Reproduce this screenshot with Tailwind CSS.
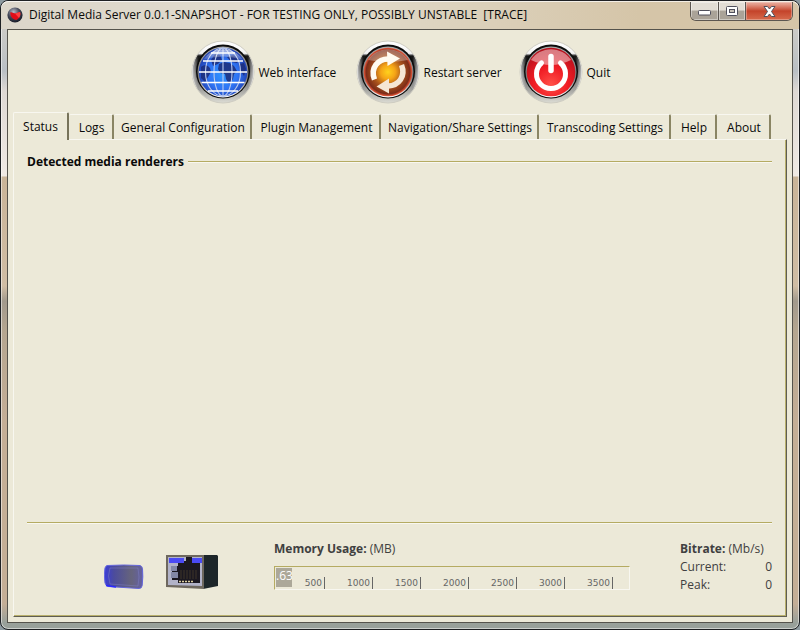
<!DOCTYPE html>
<html lang="en">
<head>
<meta charset="utf-8">
<title>Digital Media Server</title>
<script src="https://cdn.jsdelivr.net/npm/@tailwindcss/browser@4"></script>
</head>
<body class="min-h-screen bg-[#8d9aa0] font-['Open_Sans','Noto_Sans',sans-serif] text-xs text-[#0a0a0a]">
<div class="flex min-h-screen flex-col rounded-lg border border-[#1f2124] bg-[linear-gradient(to_bottom,#d9d3c8_0,#b9bfc4_70px,#ded9d4_90px,#f0eae4_175px,#c9b498_176px,#d0bda4_285px,#a39a8c_300px,#b5a690_330px,#c4ae96_420px,#c4ae96_96%,#98a09a_99%)] px-1.5 pb-1.5 inset-ring inset-ring-white/50">

  <header class="-mx-1.5 flex h-7 items-start justify-between rounded-t-lg border-t border-white/70 bg-linear-to-r from-[#dcd6ca] via-[#e2dccd] via-40% to-[#d5c5a8] to-80% px-1.5">
    <div class="flex h-[26px] items-center gap-1.5">
      <svg class="size-4" viewBox="0 0 16 16" aria-hidden="true">
        <defs><radialGradient id="app" cx=".4" cy=".3" r=".75"><stop offset="0" stop-color="#b9bcc8"/><stop offset=".5" stop-color="#454858"/><stop offset="1" stop-color="#111522"/></radialGradient></defs>
        <circle cx="8" cy="8" r="7.6" fill="url(#app)"/>
        <path d="M3.500 5 8 6.500l5-1.500c1 3-.5 6.500-3.500 8C6 13 2.500 9 3.500 5z" fill="#e00c18"/>
        <path d="M8 6.500l5-1.500c.8 2 .3 4-1 6z" fill="#ff4040"/>
      </svg>
      <h1>Digital Media Server 0.0.1-SNAPSHOT - FOR TESTING ONLY, POSSIBLY UNSTABLE&nbsp; [TRACE]</h1>
    </div>
    <div class="flex h-[19px] overflow-hidden rounded-b-md border border-t-0 border-[#5c5650]">
      <button aria-label="Minimize" class="flex w-7 items-center justify-center border-r border-[#5c5650] bg-linear-to-b from-[#e2ddd4] from-45% to-[#aaa398] to-50% pt-1 inset-ring inset-ring-white/40">
        <svg width="13" height="6" viewBox="0 0 13 6" aria-hidden="true"><rect x=".5" y=".5" width="12" height="4.500" rx="1" fill="#fff" stroke="#50505c"/></svg>
      </button>
      <button aria-label="Maximize" class="flex w-[27px] items-center justify-center border-r border-[#5c5650] bg-linear-to-b from-[#e2ddd4] from-45% to-[#aaa398] to-50% inset-ring inset-ring-white/40">
        <svg width="12" height="10" viewBox="0 0 12 10" aria-hidden="true"><rect x=".5" y=".5" width="11" height="9" rx="1" fill="#fff" stroke="#50505c"/><rect x="3.500" y="3.500" width="5" height="3" fill="#c8c2b8" stroke="#50505c"/></svg>
      </button>
      <button aria-label="Close" class="flex w-[46px] items-center justify-center bg-linear-to-b from-[#e5a190] from-10% via-[#c4432a] via-50% to-[#d66a4c] inset-ring inset-ring-white/30">
        <svg width="13" height="11" viewBox="0 0 13 11" aria-hidden="true"><path d="M1 .5h3.500l2 2.500 2-2.500H12L8.500 5.500 12 10.500H8.500l-2-2.500-2 2.500H1l3.500-5z" fill="#fff" stroke="#50505c"/></svg>
      </button>
    </div>
  </header>

  <main class="flex flex-1 flex-col border border-[#55534c] bg-[#ece9d8] px-[5px] pb-[5px]">
    <nav aria-label="Server actions" class="flex items-center justify-center gap-6 pt-2.5 pb-2">
      <button class="flex w-[141px] items-center gap-1 whitespace-nowrap">
        <svg class="size-16 shrink-0" viewBox="0 0 64 64" aria-hidden="true">
          <defs>
            <linearGradient id="rim" x2="0" y2="1"><stop offset="0" stop-color="#fff"/><stop offset=".2" stop-color="#f4f4f4"/><stop offset=".24" stop-color="#151515"/><stop offset=".45" stop-color="#2a2a2a"/><stop offset=".7" stop-color="#8e8e8c"/><stop offset="1" stop-color="#dcdcd4"/></linearGradient>
            <linearGradient id="rimx"><stop offset="0" stop-color="#fff" stop-opacity=".75"/><stop offset=".1" stop-color="#fff" stop-opacity="0"/><stop offset=".9" stop-color="#fff" stop-opacity="0"/><stop offset="1" stop-color="#fff" stop-opacity=".75"/></linearGradient>
            <linearGradient id="edge" x2="0" y2="1"><stop offset="0" stop-color="#a8a8a8"/><stop offset=".6" stop-color="#777"/><stop offset="1" stop-color="#fff"/></linearGradient>
            <radialGradient id="blue" cy=".55"><stop offset="0" stop-color="#2f96ff"/><stop offset=".6" stop-color="#2f74f4"/><stop offset="1" stop-color="#2346b8"/></radialGradient>
            <linearGradient id="shine" x2="0" y2="1"><stop offset="0" stop-color="#fff" stop-opacity=".65"/><stop offset="1" stop-color="#fff" stop-opacity=".1"/></linearGradient>
          </defs>
          <circle cx="32" cy="32" r="31" fill="url(#rim)" stroke="#cfcdc2"/><circle cx="32" cy="32" r="31" fill="url(#rimx)"/>
          <circle cx="32" cy="31.500" r="27" fill="#0c0c0c"/><circle cx="32" cy="32" r="25.500" fill="url(#edge)"/>
          <circle cx="32" cy="32" r="24.300" fill="url(#blue)"/>
          <path d="M10 27c3-3 7-2 9 1l1 4-3 5-3 5-4-4zM20 20l4-6 5 1 2 5-4 4-5 2zM28 24l5-2 6 1 4 3 3 5-3 3-1 5-4 5-3-5-1-5-5-1-2-4zM36 17l6-2 6 4-2 4-6-1zM48 24l5-1 2 6-2 7-4-6z" fill="#1c2c78" opacity=".85"/>
          <g fill="none" stroke="#b9c8ec" stroke-width="1.100"><ellipse cx="32" cy="32" rx="9" ry="24"/><ellipse cx="32" cy="32" rx="17.500" ry="24"/><path d="M32 8v48"/></g>
          <path d="M20 13h24M12 21h40M8 32h48M10.500 42.500h43M17 51h30" stroke="#fff" stroke-width="1.500"/>
          <path d="M12 20a24 24 0 0 1 40 0Q32 13 12 20z" fill="url(#shine)"/>
        </svg>
        <span class="pt-0.5">Web interface</span>
      </button>
      <button class="flex w-[139px] items-center gap-1 whitespace-nowrap">
        <svg class="size-16 shrink-0" viewBox="0 0 64 64" aria-hidden="true">
          <defs><radialGradient id="orange"><stop offset="0" stop-color="#ffd21c"/><stop offset=".3" stop-color="#f5a416"/><stop offset=".62" stop-color="#a8521c"/><stop offset=".9" stop-color="#7c2c18"/><stop offset="1" stop-color="#f0583a"/></radialGradient></defs>
          <circle cx="32" cy="32" r="31" fill="url(#rim)" stroke="#cfcdc2"/><circle cx="32" cy="32" r="31" fill="url(#rimx)"/>
          <circle cx="32" cy="31.500" r="27" fill="#0c0c0c"/><circle cx="32" cy="32" r="25.500" fill="url(#edge)"/>
          <circle cx="32" cy="32" r="24.300" fill="url(#orange)"/>
          <path d="M12 20a24 24 0 0 1 40 0Q32 24 12 20z" fill="#fff" opacity=".3"/>
          <path d="M18.500 39.500C14 28 22 18.500 33 19" fill="none" stroke="#fffaf0" stroke-width="5.500"/><path d="M31 11.500l13 7L31.500 26z" fill="#fffaf0"/>
          <path d="M45.500 25C50 36 43 45.500 32 46" fill="none" stroke="#f5e6d4" stroke-width="5.500"/><path d="M33 38.500 20.500 46.500l12.500 7z" fill="#f5e6d4"/>
        </svg>
        <span class="pt-0.5">Restart server</span>
      </button>
      <button class="flex w-[91px] items-center gap-1 whitespace-nowrap">
        <svg class="size-16 shrink-0" viewBox="0 0 64 64" aria-hidden="true">
          <defs><radialGradient id="red" cy=".75" r=".7"><stop offset="0" stop-color="#ff5048"/><stop offset=".5" stop-color="#f01c24"/><stop offset="1" stop-color="#b8101c"/></radialGradient></defs>
          <circle cx="32" cy="32" r="31" fill="url(#rim)" stroke="#cfcdc2"/><circle cx="32" cy="32" r="31" fill="url(#rimx)"/>
          <circle cx="32" cy="31.500" r="27" fill="#0c0c0c"/><circle cx="32" cy="32" r="25.500" fill="url(#edge)"/>
          <circle cx="32" cy="32" r="24.300" fill="url(#red)"/>
          <path d="M12 20a24 24 0 0 1 40 0Q32 30 12 20z" fill="#fff" opacity=".45"/>
          <path d="M22.500 23A14.500 14.500 0 1 0 41.500 23" fill="none" stroke="#fff" stroke-width="5" stroke-linecap="round"/><path d="M32 16.500v14" stroke="#fff" stroke-width="5.500" stroke-linecap="round"/>
        </svg>
        <span class="pt-0.5">Quit</span>
      </button>
    </nav>

    <div role="tablist" class="flex items-end">
      <button role="tab" aria-selected="true" class="relative z-10 -mb-px h-7 w-14 rounded-t-xs border-t border-r-2 border-l border-t-[#f8f7f0] border-r-[#77735a] border-l-[#f8f7f0] bg-[#ece9d8]">Status</button>
      <button role="tab" class="h-[25px] w-[45px] rounded-t-xs border-t border-r-2 border-t-[#f8f7f0] border-r-[#8a8564] pt-0.5 pl-0.5">Logs</button>
      <button role="tab" class="h-[25px] w-[138px] rounded-t-xs border-t border-r-2 border-t-[#f8f7f0] border-r-[#8a8564] pt-0.5 pl-0.5">General Configuration</button>
      <button role="tab" class="h-[25px] w-[129px] rounded-t-xs border-t border-r-2 border-t-[#f8f7f0] border-r-[#8a8564] pt-0.5 pl-0.5">Plugin Management</button>
      <button role="tab" class="h-[25px] w-[158px] rounded-t-xs border-t border-r-2 border-t-[#f8f7f0] border-r-[#8a8564] pt-0.5 pl-0.5">Navigation/Share Settings</button>
      <button role="tab" class="h-[25px] w-[132px] rounded-t-xs border-t border-r-2 border-t-[#f8f7f0] border-r-[#8a8564] pt-0.5 pl-0.5">Transcoding Settings</button>
      <button role="tab" class="h-[25px] w-[46px] rounded-t-xs border-t border-r-2 border-t-[#f8f7f0] border-r-[#8a8564] pt-0.5 pl-0.5">Help</button>
      <button role="tab" class="h-[25px] w-[54px] rounded-t-xs border-t border-r-2 border-t-[#f8f7f0] border-r-[#8a8564] pt-0.5 pl-0.5">About</button>
    </div>

    <section role="tabpanel" class="flex flex-1 flex-col border border-t-[#f8f7f0] border-r-[#5f5d52] border-b-[#5f5d52] border-l-[#f8f7f0]">
      <div class="flex flex-1 flex-col border-r border-b border-[#b9b06c] px-[13px] pt-3.5 pb-[21px]">
        <div class="flex items-center gap-1">
          <h2 class="font-bold">Detected media renderers</h2>
          <div class="h-0.5 flex-1 border-t border-b border-t-[#b5ab62] border-b-[#f8f7f0]"></div>
        </div>
        <div class="flex-1"></div>
        <div class="h-0.5 border-t border-b border-t-[#b5ab62] border-b-[#f8f7f0]"></div>

        <footer class="flex items-start pt-3.5 text-[#404040]">
          <div class="flex w-[247px] items-end gap-[22px] pt-4 pl-[77px]">
            <svg width="40" height="36" viewBox="0 0 40 36" aria-hidden="true">
              <defs><linearGradient id="usb"><stop offset="0" stop-color="#3a3cd8"/><stop offset=".25" stop-color="#4c4c9c"/><stop offset=".7" stop-color="#66647c"/><stop offset="1" stop-color="#6460a4"/></linearGradient></defs>
              <path d="M3 11.500q17-1 33 0 2 .5 2.500 3 .8 8-.3 17-.5 3-3 3L4 32.500Q2 32 1 29-.3 20 1 14q.5-2 2-2.500z" fill="url(#usb)" stroke="#6466dc"/>
              <path d="M6 14h28q2 9 0 18L6 30Q3 22 6 14z" fill="none" stroke="#7c7ec0" stroke-width=".5"/>
              <path d="M2 31.500l10 1.500" stroke="#2a28ff" stroke-width="1.500"/>
            </svg>
            <svg width="52" height="36" viewBox="0 0 52 36" aria-hidden="true">
              <path d="M37 1h14l1 1v30l-15 3z" fill="#1d2629"/>
              <path d="M0 1h38v34L0 33z" fill="#6e685e"/><path d="M2 3h34v29L2 31z" fill="#b2b3c8"/>
              <path d="M6 12h6V7h8V3h6v4h8v22H12v-3H6z" fill="#1b1820"/>
              <path d="M3 4h15v5H3zM26 4h10v5H26z" fill="#4a4af4"/>
              <path d="M5 12h6v5H5zM5 18h7v6H5z" fill="#8388a6"/>
              <path d="M15 16v9M18 16v9M21 16v9M24 16v9M27 16v9M30 16v9" stroke="#463c2c" stroke-width=".8"/><path d="M13 27.500h15" stroke="#ddd0a0" stroke-width="1.600" stroke-dasharray="2 1"/>
            </svg>
          </div>
          <div class="w-[356px]">
            <p class="leading-[22px]" id="mem"><b>Memory Usage:</b> (MB)</p>
            <div role="meter" aria-labelledby="mem" aria-valuemin="0" aria-valuemax="3700" aria-valuenow="163" class="relative mt-1.5 flex h-6 items-end border border-t-[#b5ab62] border-r-[#f8f7f0] border-b-[#f8f7f0] border-l-[#b5ab62] text-right font-['DejaVu_Sans',sans-serif] text-[9px] leading-3 text-[#666]">
              <div class="absolute top-px left-px h-[19px] w-4 overflow-hidden bg-[#aca899] text-left font-['Open_Sans',sans-serif] text-xs leading-4 text-white">.63</div>
              <div class="w-[50px] border-r border-[#666] pr-0.5">500</div>
              <div class="w-12 border-r border-[#666] pr-0.5">1000</div>
              <div class="w-12 border-r border-[#666] pr-0.5">1500</div>
              <div class="w-12 border-r border-[#666] pr-0.5">2000</div>
              <div class="w-12 border-r border-[#666] pr-0.5">2500</div>
              <div class="w-12 border-r border-[#666] pr-0.5">3000</div>
              <div class="w-12 border-r border-[#666] pr-0.5">3500</div>
            </div>
          </div>
          <dl class="ml-auto grid w-[92px] grid-cols-[1fr_auto] leading-[18px]">
            <dt class="col-span-2 pt-0.5"><b>Bitrate:</b> (Mb/s)</dt>
            <dt>Current:</dt><dd>0</dd>
            <dt>Peak:</dt><dd>0</dd>
          </dl>
        </footer>
      </div>
    </section>
  </main>
</div>
</body>
</html>
